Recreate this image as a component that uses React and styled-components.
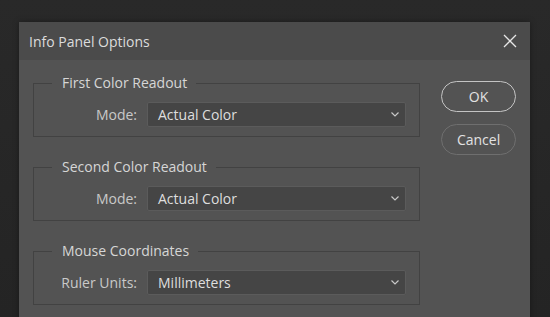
import React from 'react'
import styled, { createGlobalStyle } from 'styled-components'

const GlobalStyle = createGlobalStyle`
  html, body {
    margin: 0;
    background: #262626;
    font-family: "Open Sans", "Noto Sans", sans-serif;
  }
`

const Page = styled.div`
  width: 550px;
  height: 317px;
  overflow: hidden;
  padding: 22px 20px 0 19px;
  box-sizing: border-box;
  background: linear-gradient(#292929, #242424);
`

const Dialog = styled.div`
  width: 511px;
  height: 320px;
  background: #535353;
  box-shadow: 0 0 6px rgba(0, 0, 0, 0.35);
`

const Header = styled.div`
  height: 38px;
  background: #4b4b4b;
  display: flex;
  align-items: center;
  justify-content: space-between;
  padding: 0 13px 0 10px;
`

const Title = styled.div`
  color: #dcdcdc;
  font-size: 14px;
`

const CloseButton = styled.button`
  background: none;
  border: 0;
  padding: 0;
  width: 14px;
  height: 14px;
  display: flex;
  cursor: pointer;
`

const Body = styled.div`
  display: flex;
  gap: 21px;
  padding: 13px 14px 0 14px;
`

const Groups = styled.div`
  width: 388px;
  display: flex;
  flex-direction: column;
  gap: 20px;
`

const Group = styled.fieldset`
  margin: 0;
  padding: 9px 13px 9px 0;
  border: 1px solid #424242;
  min-width: 0;
`

const Legend = styled.legend`
  margin-left: 18px;
  padding: 0 9px 0 10px;
  color: #d6d6d6;
  font-size: 14px;
  line-height: 20px;
`

const Row = styled.div`
  display: flex;
  align-items: center;
  gap: 10px;
`

const Label = styled.label`
  width: 103px;
  text-align: right;
  color: #c9c9c9;
  font-size: 14px;
`

const Select = styled.div`
  flex: 1;
  height: 25px;
  box-sizing: border-box;
  display: flex;
  align-items: center;
  justify-content: space-between;
  padding: 0 6px 0 10px;
  background: #454545;
  border: 1px solid #5b5b5b;
  border-radius: 2px;
  color: #dedede;
  font-size: 14px;
`

const Buttons = styled.div`
  width: 75px;
  padding-top: 8px;
  display: flex;
  flex-direction: column;
  gap: 12px;
`

const Button = styled.button`
  height: 31px;
  border-radius: 16px;
  background: transparent;
  border: 1.5px solid ${p => (p.$primary ? '#c4c4c4' : '#6f6f6f')};
  color: #e2e2e2;
  font-family: inherit;
  font-size: 14px;
  padding: 0;
  cursor: pointer;
`

const Chevron = () => (
  <svg width="8" height="5" viewBox="0 0 8 5">
    <path d="M0.5 0.5 L4 4 L7.5 0.5" fill="none" stroke="#c8c8c8" strokeWidth="1.2" />
  </svg>
)

const CloseIcon = () => (
  <svg width="14" height="14" viewBox="0 0 14 14">
    <path d="M1 1 L13 13 M13 1 L1 13" stroke="#e6e6e6" strokeWidth="1.3" />
  </svg>
)

const groups = [
  { title: 'First Color Readout', label: 'Mode:', value: 'Actual Color' },
  { title: 'Second Color Readout', label: 'Mode:', value: 'Actual Color' },
  { title: 'Mouse Coordinates', label: 'Ruler Units:', value: 'Millimeters' },
]

export default function App() {
  return (
    <Page>
      <GlobalStyle />
      <Dialog>
        <Header>
          <Title>Info Panel Options</Title>
          <CloseButton aria-label="Close">
            <CloseIcon />
          </CloseButton>
        </Header>
        <Body>
          <Groups>
            {groups.map(g => (
              <Group key={g.title}>
                <Legend>{g.title}</Legend>
                <Row>
                  <Label>{g.label}</Label>
                  <Select>
                    <span>{g.value}</span>
                    <Chevron />
                  </Select>
                </Row>
              </Group>
            ))}
          </Groups>
          <Buttons>
            <Button $primary>OK</Button>
            <Button>Cancel</Button>
          </Buttons>
        </Body>
      </Dialog>
    </Page>
  )
}
